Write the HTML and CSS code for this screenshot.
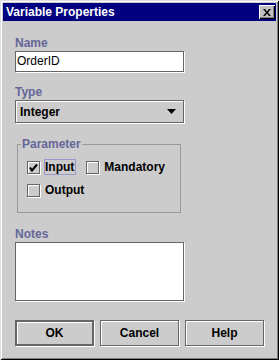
FILE: index.html
```html
<!DOCTYPE html>
<html lang="en">
  <head>
    <meta charset="UTF-8" />
    <title>Variable Properties</title>
    <link rel="stylesheet" href="styles.css">
  </head>
  <body>
    <div class="window">
      <div class="titlebar">
        <span class="title">Variable Properties</span>
        <span class="close">
          <svg width="8" height="7" viewBox="0 0 8 7">
            <path d="M0 0h2l2 2.5L6 0h2L5 3.5 8 7H6L4 4.5 2 7H0l3-3.5z" fill="#000" />
          </svg>
        </span>
      </div>

      <div class="content">
        <div class="label">Name</div>
        <div class="field text">OrderID</div>

        <div class="label">Type</div>
        <div class="field combo">
          <span>Integer</span>
          <svg width="9" height="5" viewBox="0 0 9 5">
            <path d="M0 0h9L4.5 5z" fill="#000" />
          </svg>
        </div>

        <fieldset class="group">
          <legend>Parameter</legend>
          <div class="row">
            <div class="option">
              <span class="check">
                <svg width="11" height="11" viewBox="0 0 11 11">
                  <path d="M2 5.5 4 8.5 9 2.5" stroke="#000" stroke-width="2" fill="none" />
                </svg>
              </span>
              <span class="opt-text focus">Input</span>
            </div>
            <div class="option">
              <span class="check"></span>
              <span class="opt-text">Mandatory</span>
            </div>
          </div>
          <div class="row">
            <div class="option">
              <span class="check"></span>
              <span class="opt-text">Output</span>
            </div>
          </div>
        </fieldset>

        <div class="label">Notes</div>
        <div class="field notes"></div>

        <div class="buttons">
          <div class="btn default">OK</div>
          <div class="btn">Cancel</div>
          <div class="btn">Help</div>
        </div>
      </div>
    </div>
  </body>
</html>
```

FILE: styles.css
```css
body {
  margin: 0;
  font-family: "Liberation Sans", Arial, sans-serif;
  font-size: 12px;
}
.window {
  width: 279px;
  height: 360px;
  box-sizing: border-box;
  padding: 3px;
  background: #cccccc;
  box-shadow: inset 1px 1px 0 #dfdfdf, inset -1px -1px 0 #000,
    inset 2px 2px 0 #fff, inset -2px -2px 0 #808080;
}
.titlebar {
  height: 18px;
  background: #000080;
  color: #fff;
  font-weight: bold;
  display: flex;
  align-items: center;
  justify-content: space-between;
  padding: 0 1px 0 3px;
}
.close {
  width: 16px;
  height: 14px;
  box-sizing: border-box;
  background: #c0c0c0;
  display: flex;
  align-items: center;
  justify-content: center;
  box-shadow: inset 1px 1px 0 #fff, inset -1px -1px 0 #000,
    inset -2px -2px 0 #808080;
}
.content {
  padding: 15px 0 0 12px;
}
.label {
  height: 14px;
  line-height: 14px;
  font-weight: bold;
  color: #666699;
  margin-bottom: 1px;
}
.field {
  width: 169px;
  box-sizing: border-box;
  border: 1px solid #666666;
  box-shadow: 1px 1px 0 #fff;
}
.text {
  height: 21px;
  background: #fff;
  line-height: 19px;
  padding-left: 1px;
  margin-bottom: 13px;
}
.combo {
  height: 23px;
  margin-top: 1px;
  background: #cccccc;
  font-weight: bold;
  display: flex;
  align-items: center;
  justify-content: space-between;
  padding: 0 7px 0 4px;
  box-shadow: inset 1px 1px 0 #fff, 1px 1px 0 #fff;
}
.group {
  width: 164px;
  box-sizing: border-box;
  margin: 14px 0 14px 2px;
  padding: 8px 0 14px 9px;
  border: 1px solid #999999;
  min-width: 0;
}
.group legend {
  padding: 0 1px;
  margin-left: -6px;
  font-weight: bold;
  color: #666699;
  line-height: 14px;
}
.row {
  display: flex;
  gap: 10px;
  height: 16px;
  align-items: center;
}
.row + .row {
  margin-top: 7px;
}
.option {
  display: flex;
  align-items: center;
}
.check {
  width: 13px;
  height: 13px;
  box-sizing: border-box;
  border: 1px solid #666666;
  box-shadow: inset 1px 1px 0 #fff, 1px 1px 0 #fff;
  display: flex;
}
.opt-text {
  font-weight: bold;
  margin-left: 4px;
  border: 1px solid transparent;
  line-height: 14px;
  padding-right: 1px;
}
.opt-text.focus {
  border-color: #9999cc;
}
.notes {
  height: 59px;
  background: #fff;
  margin-top: 1px;
}
.buttons {
  display: flex;
  gap: 6px;
  margin-top: 19px;
}
.btn {
  width: 79px;
  height: 26px;
  box-sizing: border-box;
  border: 1px solid #666666;
  box-shadow: inset 1px 1px 0 #fff, 1px 1px 0 #fff;
  font-weight: bold;
  display: flex;
  align-items: center;
  justify-content: center;
}
.btn.default {
  border-width: 2px;
}
```
